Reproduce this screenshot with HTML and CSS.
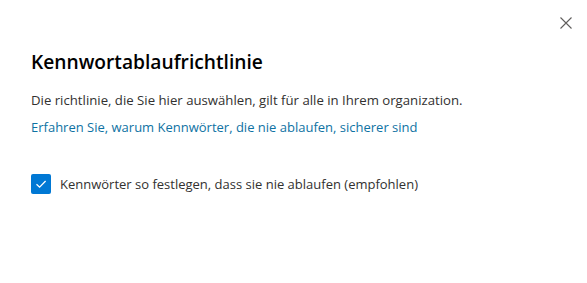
FILE: index.html
```html
<!DOCTYPE html>
<html lang="de">
<head>
    <meta charset="UTF-8">
    <title>Kennwortablaufrichtlinie</title>
    <link rel="stylesheet" href="styles.css">
</head>
<body>
    <div class="panel">
        <button class="close-btn" aria-label="Schließen">
            <svg width="12" height="12" viewBox="0 0 12 12">
                <path d="M0.5 0.5 L11.5 11.5 M11.5 0.5 L0.5 11.5" stroke="#605e5c" stroke-width="1.1" fill="none"/>
            </svg>
        </button>

        <h1 class="title">Kennwortablaufrichtlinie</h1>
        <p class="desc">Die richtlinie, die Sie hier auswählen, gilt für alle in Ihrem organization.</p>
        <a class="learn-link" href="#">Erfahren Sie, warum Kennwörter, die nie ablaufen, sicherer sind</a>

        <label class="check-row">
            <span class="check-box">
                <svg width="12" height="12" viewBox="0 0 12 12">
                    <path d="M1.5 6.2 L4.6 9.2 L10.6 3" stroke="#fff" stroke-width="1.3" fill="none"/>
                </svg>
            </span>
            <span class="check-label">Kennwörter so festlegen, dass sie nie ablaufen (empfohlen)</span>
        </label>
    </div>
</body>
</html>
```

FILE: styles.css
```css
body {
    margin: 0;
    background: #fff;
    font-family: 'Open Sans', 'Noto Sans', sans-serif;
    color: #323130;
}
.panel {
    position: relative;
    padding: 48px 32px 0 31px;
}
.close-btn {
    position: absolute;
    top: 11px;
    right: 9px;
    width: 24px;
    height: 24px;
    padding: 0;
    border: none;
    background: none;
    display: flex;
    align-items: center;
    justify-content: center;
}
.title {
    margin: 0;
    font-size: 19.2px;
    font-weight: 600;
    line-height: 28px;
    color: #000;
}
.desc {
    margin: 14px 0 0;
    font-size: 13.2px;
    line-height: 20px;
}
.learn-link {
    display: block;
    margin-top: 7px;
    font-size: 13px;
    line-height: 20px;
    color: #0e72a3;
    text-decoration: none;
}
.check-row {
    display: flex;
    align-items: center;
    gap: 9px;
    margin-top: 37px;
}
.check-box {
    width: 20px;
    height: 20px;
    border-radius: 2px;
    background: #0078d4;
    display: flex;
    align-items: center;
    justify-content: center;
}
.check-label {
    font-size: 13px;
    line-height: 20px;
}
```
